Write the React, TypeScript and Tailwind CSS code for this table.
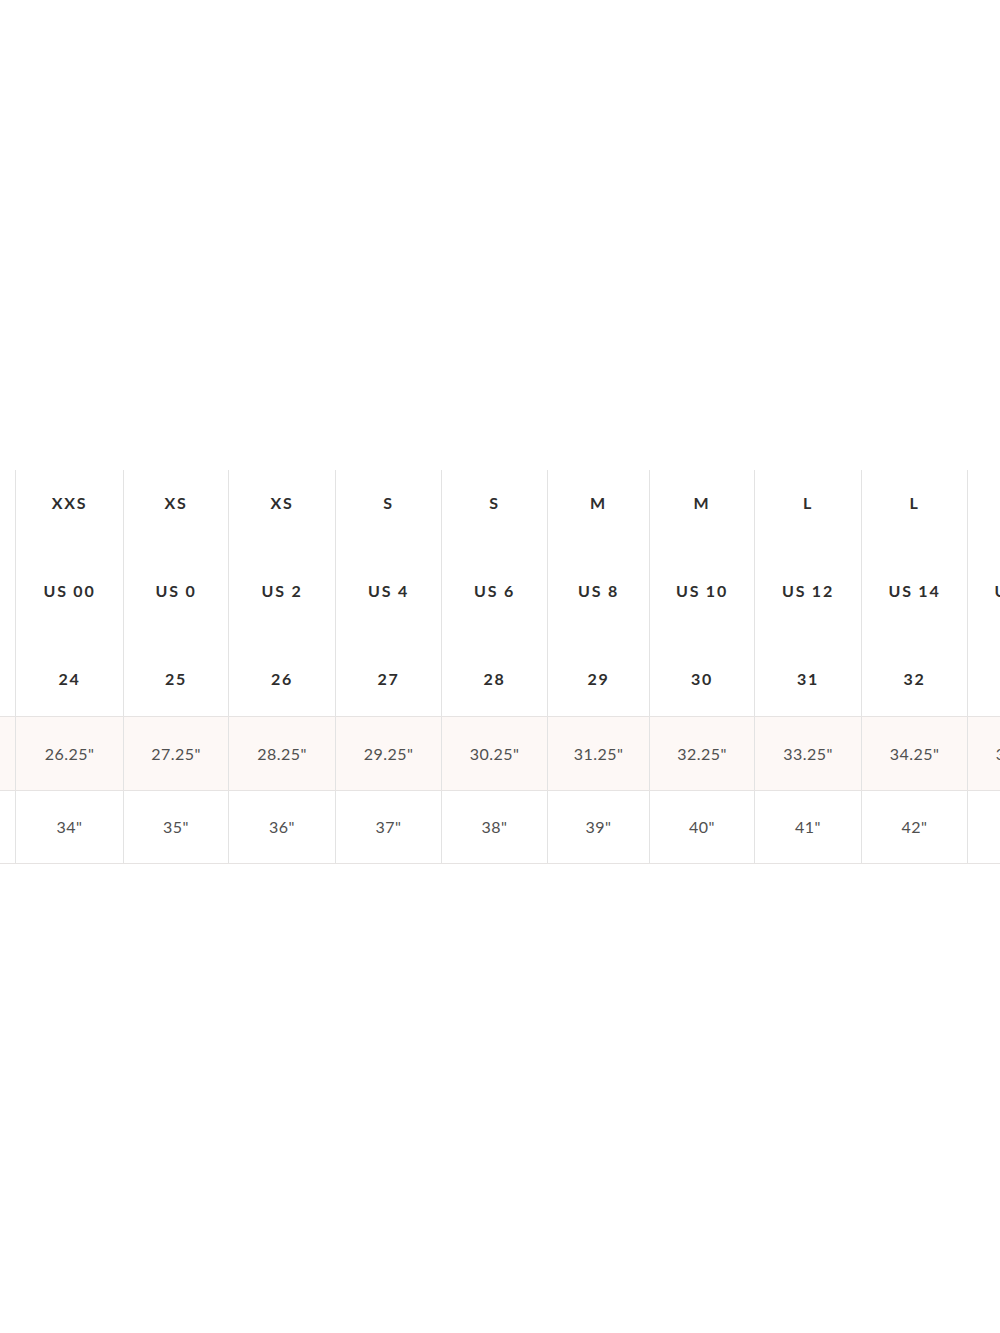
const widths = [16, 108, 105, 107, 106, 106, 102, 105, 107, 106, 106];

const sizes = ["", "XXS", "XS", "XS", "S", "S", "M", "M", "L", "L", "XL"];
const usSizes = ["", "US 00", "US 0", "US 2", "US 4", "US 6", "US 8", "US 10", "US 12", "US 14", "US 16"];
const waist = ["", "24", "25", "26", "27", "28", "29", "30", "31", "32", "33"];
const waistIn = ["", '26.25"', '27.25"', '28.25"', '29.25"', '30.25"', '31.25"', '32.25"', '33.25"', '34.25"', '35.25"'];
const hipIn = ["", '34"', '35"', '36"', '37"', '38"', '39"', '40"', '41"', '42"', '43"'];

const App = () => {
  return (
    <div
      className="w-[1000px] h-[1333px] bg-white overflow-hidden pt-[470px]"
      style={{ fontFamily: "Lato, 'Open Sans', sans-serif" }}
    >
      <div className="w-max">
        {/* header block */}
        <div className="flex">
          {widths.map((w, i) => (
            <div
              key={i}
              style={{ width: w }}
              className="shrink-0 h-[246px] border-r border-[#e3e3e3] flex flex-col justify-between items-center pt-[25px] pb-[29px] text-[16px] font-bold tracking-[0.11em] text-[#2e2e2e] leading-4"
            >
              <span>{sizes[i]}</span>
              <span>{usSizes[i]}</span>
              <span>{waist[i]}</span>
            </div>
          ))}
        </div>

        {/* inches row */}
        <div className="flex bg-[#fdf8f6] border-t border-[#e6e3e2]">
          {widths.map((w, i) => (
            <div
              key={i}
              style={{ width: w }}
              className="shrink-0 h-[73px] border-r border-[#e3e3e3] flex items-center justify-center text-[16px] tracking-[0.03em] text-[#505050]"
            >
              {waistIn[i]}
            </div>
          ))}
        </div>

        {/* hip row */}
        <div className="flex border-t border-b border-[#e6e3e2]">
          {widths.map((w, i) => (
            <div
              key={i}
              style={{ width: w }}
              className="shrink-0 h-[72px] border-r border-[#e3e3e3] flex items-center justify-center text-[16px] tracking-[0.03em] text-[#505050]"
            >
              {hipIn[i]}
            </div>
          ))}
        </div>
      </div>
    </div>
  );
};

export default App;
